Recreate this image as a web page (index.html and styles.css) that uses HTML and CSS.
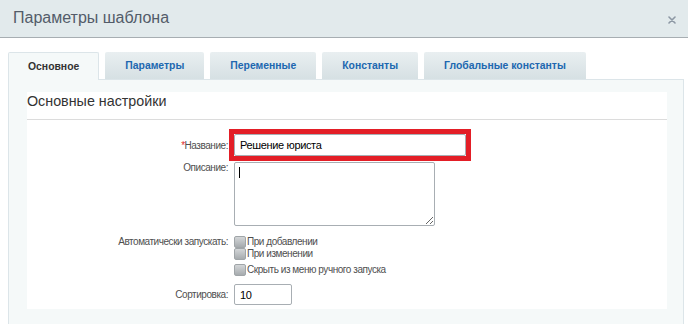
FILE: index.html
```html
<!DOCTYPE html>
<html lang="ru">
<head>
<meta charset="utf-8">
<title>Параметры шаблона</title>
<link rel="stylesheet" href="styles.css">
</head>
<body>
<div class="dialog">
  <div class="header">
    <span class="title">Параметры шаблона</span>
    <span class="close"><svg width="8" height="8" viewBox="0 0 8 8"><path d="M1 1L7 7M7 1L1 7" stroke="#8d98a4" stroke-width="1.6" stroke-linecap="round"/></svg></span>
  </div>
  <div class="body">
    <div class="tabs">
      <div class="tab active">Основное</div>
      <div class="tab">Параметры</div>
      <div class="tab">Переменные</div>
      <div class="tab">Константы</div>
      <div class="tab">Глобальные константы</div>
    </div>
    <div class="panel">
      <div class="inner">
        <div class="heading">Основные настройки</div>
        <div class="row row-name">
          <div class="label"><span class="req">*</span>Название:</div>
          <div class="control"><span class="highlight"><input class="text" type="text" value="Решение юриста"></span></div>
        </div>
        <div class="row row-desc">
          <div class="label top">Описание:</div>
          <div class="control caret-wrap"><textarea class="area"></textarea><span class="caret"></span></div>
        </div>
        <div class="row row-auto">
          <div class="label top">Автоматически запускать:</div>
          <div class="control checks">
            <label class="check"><input type="checkbox" class="cb">При добавлении</label>
            <label class="check"><input type="checkbox" class="cb">При изменении</label>
          </div>
        </div>
        <div class="row row-hide">
          <div class="label"></div>
          <div class="control checks">
            <label class="check"><input type="checkbox" class="cb">Скрыть из меню ручного запуска</label>
          </div>
        </div>
        <div class="row row-sort">
          <div class="label">Сортировка:</div>
          <div class="control"><input class="text small" type="text" value="10"></div>
        </div>
      </div>
    </div>
  </div>
</div>
</body>
</html>
```

FILE: styles.css
```css
html, body {
  margin: 0;
  padding: 0;
  background: #ffffff;
  overflow: hidden;
}
body {
  font-family: "Liberation Sans", Arial, sans-serif;
  color: #333;
}
.dialog {
  width: 688px;
  height: 324px;
}
.header {
  height: 37px;
  background: #e2eaec;
  border-bottom: 1px solid #a7aeb2;
  display: flex;
  align-items: center;
  justify-content: space-between;
  padding: 0 12px 0 13px;
}
.title {
  font-size: 16px;
  color: #535c69;
  position: relative;
  top: -1px;
}
.close {
  display: flex;
  width: 8px;
  height: 8px;
  position: relative;
  top: 1px;
}
.body {
  padding: 14px 4px 0 8px;
}
.tabs {
  display: flex;
  gap: 6px;
  height: 27px;
}
.tab {
  padding: 0 20px;
  height: 27px;
  line-height: 27px;
  font-size: 10.4px;
  font-weight: bold;
  color: #2067b0;
  background: linear-gradient(#e9eff1, #d6e0e3);
  border-radius: 2px 2px 0 0;
  box-sizing: border-box;
}
.tab.active {
  color: #333;
  background: #f5f9f9;
  border: 1px solid #dce5e9;
  border-bottom: none;
  height: 28px;
  line-height: 27px;
  padding: 0 19px;
  position: relative;
  z-index: 1;
}
.panel {
  background: #f5f9f9;
  border: 1px solid #dce5e9;
  padding: 12px 16px 13px 18px;
  height: 260px;
  box-sizing: border-box;
}
.inner {
  background: #ffffff;
  padding-bottom: 4px;
}
.heading {
  font-size: 14.3px;
  color: #333;
  height: 28px;
  line-height: 19px;
  box-sizing: border-box;
  border-bottom: 1px solid #dcdcdc;
}
.row {
  display: flex;
  align-items: center;
}
.label {
  width: 201px;
  padding-right: 6px;
  text-align: right;
  font-size: 10px;
  letter-spacing: -0.45px;
  color: #4f4f4f;
  flex: none;
}
.label.top {
  align-self: flex-start;
}
.req {
  color: #e0292a;
}
.row-name { margin-top: 14px; }
.row-desc { margin-top: 6px; }
.row-auto { margin-top: 10px; }
.row-hide { margin-top: 4px; }
.row-sort { margin-top: 8px; }
.highlight {
  display: block;
  border: 5px solid #e31e26;
  margin: -5px 0 -5px -5px;
  width: 232px;
}
.text {
  font-family: "Liberation Sans", Arial, sans-serif;
  font-size: 11px;
  letter-spacing: -0.35px;
  color: #000;
  border: 1px solid #a8aeb3;
  border-radius: 2px;
  box-sizing: border-box;
  height: 22px;
  width: 232px;
  padding: 0 5px;
  margin: 0;
  outline: none;
  display: block;
}
.text.small {
  width: 58px;
  height: 21px;
}
.caret-wrap {
  position: relative;
  display: flex;
}
.area {
  width: 201px;
  height: 64px;
  box-sizing: border-box;
  border: 1px solid #a8aeb3;
  border-radius: 2px;
  margin: 0;
  padding: 4px;
  font-family: "Liberation Sans", Arial, sans-serif;
  font-size: 11px;
  display: block;
}
.caret {
  position: absolute;
  left: 5px;
  top: 5px;
  width: 1px;
  height: 11px;
  background: #000;
}
.checks {
  display: flex;
  flex-direction: column;
}
.check {
  display: flex;
  align-items: center;
  font-size: 10px;
  letter-spacing: -0.45px;
  color: #4f4f4f;
  height: 12px;
  line-height: 12px;
}
.cb {
  appearance: none;
  -webkit-appearance: none;
  width: 12px;
  height: 12px;
  margin: 0 1px 0 0;
  border-radius: 2px;
  border: 1px solid #a0a5a8;
  background: linear-gradient(#d3d6d8, #a6abae);
  box-sizing: border-box;
  flex: none;
}
```
